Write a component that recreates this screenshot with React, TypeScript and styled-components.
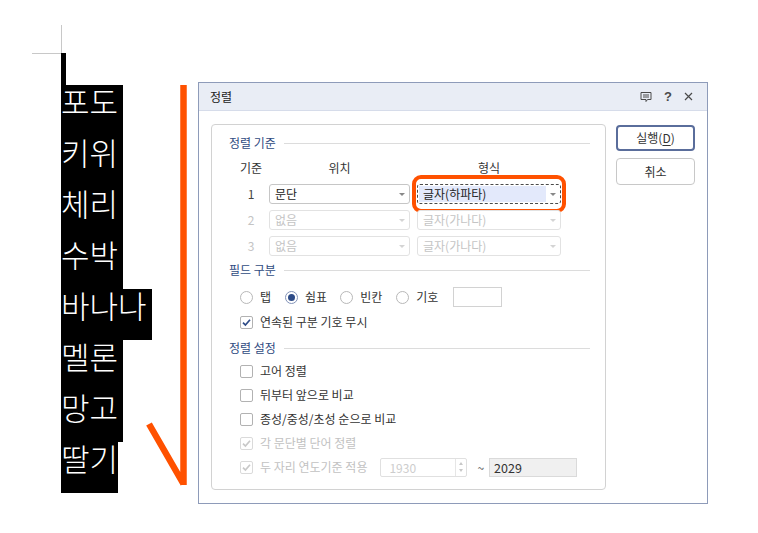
import styled, {createGlobalStyle} from "styled-components";

const GlobalStyle = createGlobalStyle`
  html, body {
    margin: 0;
    padding: 0;
    background: #fff;
  }
  * {
    box-sizing: border-box;
  }
`;

const orange = "#ff5100";
const navy = "#2d4b87";

const Page = styled.div`
  position: relative;
  width: 758px;
  height: 533px;
  display: flex;
  align-items: flex-start;
  padding-left: 61px;
  overflow: hidden;
  font-family: "Noto Sans CJK KR", "Noto Sans", sans-serif;
`;

const DocColumn = styled.div`
  position: relative;
  flex: none;
  width: 137px;
  margin-top: 53px;

  &::before {
    content: "";
    position: absolute;
    left: -29px;
    top: 0;
    width: 29px;
    height: 1px;
    background: #c8c8c8;
  }

  &::after {
    content: "";
    position: absolute;
    left: 0;
    top: -28px;
    width: 1px;
    height: 28px;
    background: #c8c8c8;
  }
`;

const EmptyLine = styled.div`
  width: 5px;
  height: 32px;
  background: #000;
`;

const SelectedLine = styled.div<{$last?: boolean}>`
  width: fit-content;
  height: 51px;
  padding-right: ${(p) => (p.$last ? 0 : 5)}px;
  background: #000;
  color: #fff;
  font-size: 31px;
  font-weight: 300;
  line-height: 31px;
  white-space: nowrap;
`;

const Annotation = styled.svg`
  position: absolute;
  left: 0;
  top: 0;
  pointer-events: none;
`;

const Dialog = styled.div`
  flex: none;
  width: 510px;
  height: 422px;
  margin-top: 82px;
  border: 1px solid #8e9bb9;
  background: #fff;
  display: flex;
  flex-direction: column;
  font-size: 12px;
  color: #333;
`;

const TitleBar = styled.div`
  height: 28px;
  flex: none;
  display: flex;
  align-items: center;
  justify-content: space-between;
  padding: 0 14px 0 11px;
  background: #e9edf5;
  border-bottom: 1px solid #d6dcea;
`;

const TitleText = styled.span`
  color: #222;
  font-size: 12px;
  line-height: 16px;
`;

const TitleIcons = styled.div`
  display: flex;
  align-items: center;
  gap: 12px;
  color: #444;
`;

const HelpMark = styled.span`
  font-family: "Liberation Sans", Arial, sans-serif;
  font-size: 13px;
  font-weight: 700;
  line-height: 14px;
  color: #4a4a4a;
`;

const Body = styled.div`
  display: flex;
  align-items: flex-start;
  gap: 10px;
  padding: 13px 11px 0 12px;
`;

const GroupBox = styled.div`
  flex: none;
  width: 395px;
  height: 366px;
  border: 1px solid #d2d2d2;
  border-radius: 4px;
  padding: 10px 15px 0 17px;
  display: flex;
  flex-direction: column;
`;

const SectionHeader = styled.div<{$gap: number}>`
  display: flex;
  align-items: center;
  gap: 8px;
  height: 16px;
  margin-top: ${(p) => p.$gap}px;
  color: #2f4c82;
  line-height: 16px;
  white-space: nowrap;

  &::after {
    content: "";
    flex: 1;
    height: 1px;
    background: #dcdcdc;
  }
`;

const SortGrid = styled.div`
  display: grid;
  grid-template-columns: 22px 141px 144px;
  grid-template-rows: 18px 20px 20px 20px;
  column-gap: 7px;
  row-gap: 6px;
  margin: 9px 0 0 11px;
`;

const ColHead = styled.div`
  display: flex;
  justify-content: center;
  line-height: 16px;
  white-space: nowrap;
  color: #333;
`;

const RowNum = styled.div<{$disabled?: boolean}>`
  text-align: center;
  line-height: 20px;
  color: ${(p) => (p.$disabled ? "#c4c4c4" : "#444")};
`;

const Combo = styled.div<{$disabled?: boolean; $focused?: boolean}>`
  position: relative;
  display: flex;
  align-items: stretch;
  height: 20px;
  border: 1px ${(p) => (p.$focused ? "dashed" : "solid")};
  border-color: ${(p) =>
    p.$focused ? "#4a4a4a" : p.$disabled ? "#e2e2e2" : "#c6c6c6"};
  border-radius: 3px;
  background: #fff;
  color: ${(p) => (p.$disabled ? "#c4c4c4" : "#222")};
`;

const ComboText = styled.div<{$selected?: boolean}>`
  flex: 1;
  margin: 1px 0 1px 1px;
  padding-left: 4px;
  line-height: 16px;
  background: ${(p) => (p.$selected ? "#e3e9fb" : "transparent")};
`;

const ComboArrow = styled.div<{$disabled?: boolean}>`
  flex: none;
  width: 14px;
  display: flex;
  align-items: center;
  justify-content: center;

  &::after {
    content: "";
    border-left: 3px solid transparent;
    border-right: 3px solid transparent;
    border-top: 3px solid ${(p) => (p.$disabled ? "#d4d4d4" : "#888")};
  }
`;

const Highlight = styled.div`
  position: relative;

  &::after {
    content: "";
    position: absolute;
    inset: -9px -5px;
    border: 4.5px solid ${orange};
    border-radius: 9px;
    pointer-events: none;
  }
`;

const OptionRow = styled.div<{$gap: number; $height?: number}>`
  display: flex;
  align-items: center;
  height: ${(p) => p.$height ?? 16}px;
  margin: ${(p) => p.$gap}px 0 0 11px;
  white-space: nowrap;
`;

const RadioItem = styled.label<{$space: number}>`
  display: flex;
  align-items: center;
  gap: 7px;
  margin-right: ${(p) => p.$space}px;
  line-height: 16px;
  color: #333;
`;

const RadioCircle = styled.span<{$checked?: boolean}>`
  width: 13px;
  height: 13px;
  border-radius: 50%;
  border: 1px solid ${(p) => (p.$checked ? "#8393b8" : "#b8b8b8")};
  display: flex;
  align-items: center;
  justify-content: center;

  &::after {
    content: "";
    display: ${(p) => (p.$checked ? "block" : "none")};
    width: 7px;
    height: 7px;
    border-radius: 50%;
    background: ${navy};
  }
`;

const SymbolInput = styled.div`
  width: 49px;
  height: 20px;
  border: 1px solid #d2d2d2;
  background: #fff;
`;

const CheckItem = styled.label<{$disabled?: boolean}>`
  display: flex;
  align-items: center;
  gap: 7px;
  line-height: 16px;
  color: ${(p) => (p.$disabled ? "#c2c2c2" : "#333")};
`;

const CheckBox = styled.span<{$disabled?: boolean}>`
  width: 13px;
  height: 13px;
  border: 1px solid ${(p) => (p.$disabled ? "#dadada" : "#b2b2b2")};
  border-radius: 2px;
  background: #fff;
  display: flex;
  align-items: center;
  justify-content: center;
`;

const SpinBox = styled.div`
  display: flex;
  width: 87px;
  height: 19px;
  margin-left: 13px;
  border: 1px solid #e0e0e0;
  border-radius: 2px;
  color: #cdcdcd;
`;

const SpinValue = styled.div`
  flex: 1;
  padding-left: 8px;
  line-height: 17px;
`;

const SpinArrows = styled.div`
  flex: none;
  width: 11px;
  border-left: 1px solid #e6e6e6;
  display: flex;
  flex-direction: column;
  align-items: center;
  justify-content: center;
  gap: 4px;
`;

const SpinTri = styled.span<{$up?: boolean}>`
  border-left: 2.5px solid transparent;
  border-right: 2.5px solid transparent;
  ${(p) => (p.$up ? "border-bottom" : "border-top")}: 3px solid #c8c8c8;
`;

const Tilde = styled.span`
  margin: 0 5px 0 10px;
  color: #555;
`;

const YearBox = styled.div`
  width: 88px;
  height: 19px;
  padding-left: 4px;
  border: 1px solid #dadada;
  background: #f0f0f0;
  color: #333;
  line-height: 17px;
  font-size: 12.5px;
`;

const ButtonColumn = styled.div`
  display: flex;
  flex-direction: column;
  gap: 7px;
  width: 79px;
  margin-top: 1px;
`;

const Button = styled.button<{$primary?: boolean}>`
  width: 79px;
  height: ${(p) => (p.$primary ? 26 : 27)}px;
  padding: 0;
  border: ${(p) => (p.$primary ? "2px solid #5a6d9b" : "1px solid #c8c8c8")};
  border-radius: 4px;
  background: #fff;
  color: #333;
  font-family: inherit;
  font-size: 12px;
  line-height: 16px;
`;

const Mnemonic = styled.span`
  text-decoration: underline;
  text-underline-offset: 2px;
`;

const fruits = ["포도", "키위", "체리", "수박", "바나나", "멜론", "망고", "딸기"];

function Check({disabled}: {disabled?: boolean}) {
  return (
    <svg width="11" height="11" viewBox="0 0 11 11">
      <path
        d="M2 5.6 L4.4 8 L9 2.8"
        fill="none"
        stroke={disabled ? "#c8c8c8" : navy}
        strokeWidth="1.7"
      />
    </svg>
  );
}

function ComboBox({
  value,
  disabled,
  focused,
}: {
  value: string;
  disabled?: boolean;
  focused?: boolean;
}) {
  return (
    <Combo $disabled={disabled} $focused={focused}>
      <ComboText $selected={focused}>{value}</ComboText>
      <ComboArrow $disabled={disabled} />
    </Combo>
  );
}

export default function App() {
  return (
    <>
      <GlobalStyle />
      <Page>
        <DocColumn>
          <EmptyLine />
          {fruits.map((f, i) => (
            <SelectedLine key={f} $last={i === fruits.length - 1}>
              {f}
            </SelectedLine>
          ))}
        </DocColumn>

        <Dialog>
          <TitleBar>
            <TitleText>정렬</TitleText>
            <TitleIcons>
              <svg width="12" height="12" viewBox="0 0 12 12">
                <path
                  d="M1 1.5 H11 V8.5 H7.5 L6 10.5 V8.5 H1 Z"
                  fill="none"
                  stroke="#4a4a4a"
                  strokeWidth="1"
                />
                <path d="M3 4 H9 M3 6 H9" stroke="#4a4a4a" strokeWidth="1" />
              </svg>
              <HelpMark>?</HelpMark>
              <svg width="9" height="9" viewBox="0 0 9 9">
                <path d="M1 1 L8 8 M8 1 L1 8" stroke="#4a4a4a" strokeWidth="1.2" />
              </svg>
            </TitleIcons>
          </TitleBar>

          <Body>
            <GroupBox>
              <SectionHeader $gap={0}>정렬 기준</SectionHeader>
              <SortGrid>
                <ColHead>기준</ColHead>
                <ColHead>위치</ColHead>
                <ColHead>형식</ColHead>

                <RowNum>1</RowNum>
                <ComboBox value="문단" />
                <Highlight>
                  <ComboBox value="글자(하파타)" focused />
                </Highlight>

                <RowNum $disabled>2</RowNum>
                <ComboBox value="없음" disabled />
                <ComboBox value="글자(가나다)" disabled />

                <RowNum $disabled>3</RowNum>
                <ComboBox value="없음" disabled />
                <ComboBox value="글자(가나다)" disabled />
              </SortGrid>

              <SectionHeader $gap={6}>필드 구분</SectionHeader>
              <OptionRow $gap={9} $height={20}>
                <RadioItem $space={14}>
                  <RadioCircle />탭
                </RadioItem>
                <RadioItem $space={13}>
                  <RadioCircle $checked />쉼표
                </RadioItem>
                <RadioItem $space={14}>
                  <RadioCircle />빈칸
                </RadioItem>
                <RadioItem $space={15}>
                  <RadioCircle />기호
                </RadioItem>
                <SymbolInput />
              </OptionRow>
              <OptionRow $gap={7}>
                <CheckItem>
                  <CheckBox>
                    <Check />
                  </CheckBox>
                  연속된 구분 기호 무시
                </CheckItem>
              </OptionRow>

              <SectionHeader $gap={10}>정렬 설정</SectionHeader>
              <OptionRow $gap={7}>
                <CheckItem>
                  <CheckBox />고어 정렬
                </CheckItem>
              </OptionRow>
              <OptionRow $gap={8}>
                <CheckItem>
                  <CheckBox />뒤부터 앞으로 비교
                </CheckItem>
              </OptionRow>
              <OptionRow $gap={8}>
                <CheckItem>
                  <CheckBox />종성/중성/초성 순으로 비교
                </CheckItem>
              </OptionRow>
              <OptionRow $gap={8}>
                <CheckItem $disabled>
                  <CheckBox $disabled>
                    <Check disabled />
                  </CheckBox>
                  각 문단별 단어 정렬
                </CheckItem>
              </OptionRow>
              <OptionRow $gap={6} $height={20}>
                <CheckItem $disabled>
                  <CheckBox $disabled>
                    <Check disabled />
                  </CheckBox>
                  두 자리 연도기준 적용
                </CheckItem>
                <SpinBox>
                  <SpinValue>1930</SpinValue>
                  <SpinArrows>
                    <SpinTri $up />
                    <SpinTri />
                  </SpinArrows>
                </SpinBox>
                <Tilde>~</Tilde>
                <YearBox>2029</YearBox>
              </OptionRow>
            </GroupBox>

            <ButtonColumn>
              <Button $primary>
                실행(<Mnemonic>D</Mnemonic>)
              </Button>
              <Button>취소</Button>
            </ButtonColumn>
          </Body>
        </Dialog>

        <Annotation width="758" height="533" viewBox="0 0 758 533">
          <path
            d="M183.5 85 V485 M149 424 L183.5 484"
            fill="none"
            stroke={orange}
            strokeWidth="6.5"
          />
        </Annotation>
      </Page>
    </>
  );
}
